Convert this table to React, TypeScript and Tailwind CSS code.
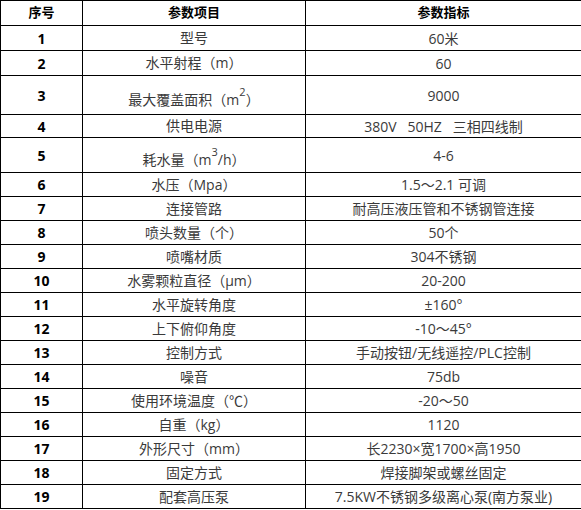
const rows: { no: string; item: React.ReactNode; value: string; h: string; tall?: boolean }[] = [
  { no: '1', item: '型号', value: '60米', h: 'h-[25px]' },
  { no: '2', item: '水平射程（m）', value: '60', h: 'h-[25px]' },
  {
    no: '3',
    item: (
      <>
        最大覆盖面积（m<sup className="relative -top-[9px] align-baseline text-[11px]">2</sup>）
      </>
    ),
    value: '9000',
    h: 'h-[39px]',
    tall: true,
  },
  { no: '4', item: '供电电源', value: '380V   50HZ   三相四线制', h: 'h-[23px]' },
  {
    no: '5',
    item: (
      <>
        耗水量（m<sup className="relative -top-[9px] align-baseline text-[11px]">3</sup>/h）
      </>
    ),
    value: '4-6',
    h: 'h-[35px]',
    tall: true,
  },
  { no: '6', item: '水压（Mpa）', value: '1.5～2.1 可调', h: 'h-[24px]' },
  { no: '7', item: '连接管路', value: '耐高压液压管和不锈钢管连接', h: 'h-[24px]' },
  { no: '8', item: '喷头数量（个）', value: '50个', h: 'h-[24px]' },
  { no: '9', item: '喷嘴材质', value: '304不锈钢', h: 'h-[24px]' },
  { no: '10', item: '水雾颗粒直径（μm）', value: '20-200', h: 'h-[24px]' },
  { no: '11', item: '水平旋转角度', value: '±160°', h: 'h-[24px]' },
  { no: '12', item: '上下俯仰角度', value: '-10～45°', h: 'h-[24px]' },
  { no: '13', item: '控制方式', value: '手动按钮/无线遥控/PLC控制', h: 'h-[24px]' },
  { no: '14', item: '噪音', value: '75db', h: 'h-[24px]' },
  { no: '15', item: '使用环境温度（℃）', value: '-20～50', h: 'h-[24px]' },
  { no: '16', item: '自重（kg）', value: '1120', h: 'h-[24px]' },
  { no: '17', item: '外形尺寸（mm）', value: '长2230×宽1700×高1950', h: 'h-[24px]' },
  { no: '18', item: '固定方式', value: '焊接脚架或螺丝固定', h: 'h-[24px]' },
  { no: '19', item: '配套高压泵', value: '7.5KW不锈钢多级离心泵(南方泵业)', h: 'h-[24px]' },
];

export default function App() {
  return (
    <div className="w-[581px] h-[510px] bg-white font-['Open_Sans','Noto_Sans_CJK_SC',sans-serif] text-[14px] text-[#3a3a3a]">
      <table className="w-[581px] border-collapse table-fixed">
        <thead>
          <tr className="h-[25px]">
            <th className="w-[82px] border border-black font-bold text-black text-[13px] text-center p-0">序号</th>
            <th className="w-[223px] border border-black font-bold text-black text-[13px] text-center p-0">参数项目</th>
            <th className="w-[276px] border border-black font-bold text-black text-[13px] text-center p-0">参数指标</th>
          </tr>
        </thead>
        <tbody>
          {rows.map((r) => (
            <tr key={r.no} className={r.h}>
              <td className="border border-black text-center font-bold text-black text-[14px] p-0">{r.no}</td>
              <td className={`border border-black text-center p-0 leading-[18px] ${r.tall ? 'pt-[10px]' : ''}`}>
                {r.item}
              </td>
              <td className="border border-black text-center p-0 whitespace-pre">{r.value}</td>
            </tr>
          ))}
        </tbody>
      </table>
    </div>
  );
}
